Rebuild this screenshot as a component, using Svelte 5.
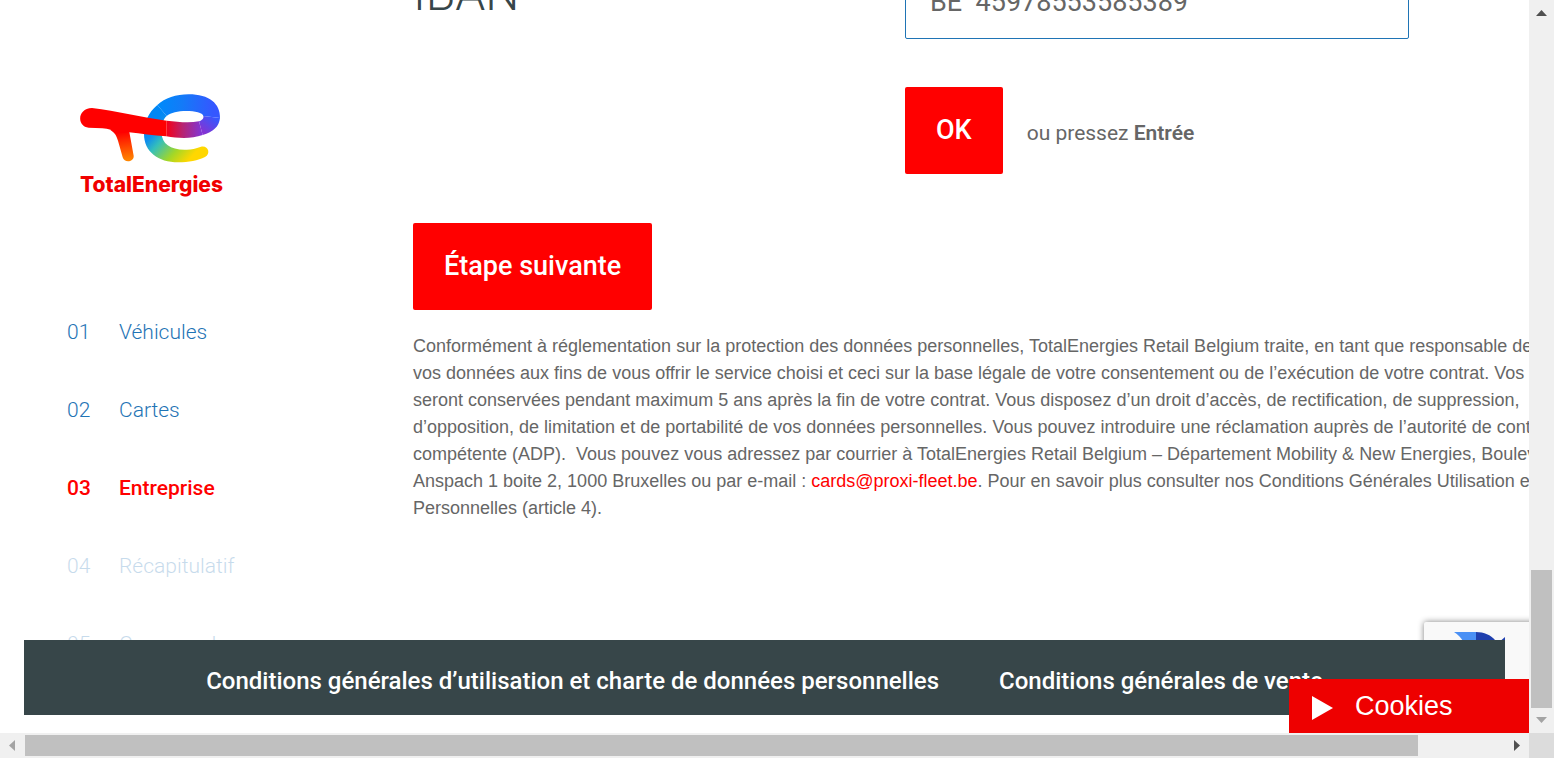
<script>
  const steps = [
    { no: '01', label: 'Véhicules', state: 'done' },
    { no: '02', label: 'Cartes', state: 'done' },
    { no: '03', label: 'Entreprise', state: 'current' },
    { no: '04', label: 'Récapitulatif', state: 'upcoming' },
    { no: '05', label: 'Commande', state: 'upcoming' }
  ];
  let iban = $state('BE  45978553585389');
</script>

<div class="window">
  <div class="page">
    <aside class="sidebar">
      <a class="logo" href="#home" aria-label="TotalEnergies">
        <svg viewBox="60 41 423 207" aria-hidden="true">
          <defs>
            <linearGradient id="tail" gradientUnits="userSpaceOnUse" x1="270" y1="135" x2="385" y2="240">
              <stop offset="0" stop-color="#0087f5" />
              <stop offset=".16" stop-color="#108fec" />
              <stop offset=".36" stop-color="#35bfba" />
              <stop offset=".7" stop-color="#a2d728" />
              <stop offset="1" stop-color="#ffd700" />
            </linearGradient>
            <linearGradient id="crown" gradientUnits="userSpaceOnUse" x1="300" y1="80" x2="460" y2="90">
              <stop offset="0" stop-color="#0089fa" />
              <stop offset=".4" stop-color="#137bf8" />
              <stop offset="1" stop-color="#3557ff" />
            </linearGradient>
            <linearGradient id="bend" gradientUnits="userSpaceOnUse" x1="465" y1="110" x2="430" y2="155">
              <stop offset="0" stop-color="#3558ff" />
              <stop offset="1" stop-color="#8434d3" />
            </linearGradient>
            <linearGradient id="bar" gradientUnits="userSpaceOnUse" x1="320" y1="0" x2="425" y2="0">
              <stop offset="0" stop-color="#f50017" />
              <stop offset=".45" stop-color="#b82370" />
              <stop offset="1" stop-color="#8035d6" />
            </linearGradient>
            <linearGradient id="stem" gradientUnits="userSpaceOnUse" x1="190" y1="155" x2="200" y2="240">
              <stop offset="0" stop-color="#ff0000" />
              <stop offset="1" stop-color="#ff8500" />
            </linearGradient>
          </defs>
          <path fill="url(#tail)" d="M292 74 C265 96 252 128 252 161 C252 214 294 246 355 246 C386 246 414 240 435 230 C454 219 444 194 423 199 C404 206 392 209 374 208 C331 207 305 190 305 157 C305 132 309 117 320 107 Z" />
          <path fill="url(#crown)" d="M292 74 C315 53 348 42 386 42 C448 42 481 70 480 113 L430 107 C428 97 405 92 379 92 C353 92 333 97 320 107 Z" />
          <path fill="url(#bend)" d="M430 107 L480 113 C477 139 460 155 428 164 L417 123 C426 120 432 114 430 107 Z" />
          <path fill="url(#bar)" d="M417 123 L428 164 C394 176 356 174 319 168 L320 121 C354 125 388 128 417 123 Z" />
          <path fill="url(#stem)" d="M150 148 C166 157 170 168 174 181 L188 231 C193 250 223 245 221 226 L207 150 Z" />
          <path fill="#ff0000" d="M96 83 C171 91 245 112 320 121 L319 168 C279 166 243 160 207 156 L170 159 C161 149 145 146 127 144 L86 142 C50 138 51 84 96 83 Z" />
        </svg>
        <span>TotalEnergies</span>
      </a>
      <nav aria-label="Étapes">
        {#each steps as step}
          <a class={step.state} href={'#etape-' + step.no}>
            <span>{step.no}</span><span>{step.label}</span>
          </a>
        {/each}
      </nav>
    </aside>

    <main>
      <form onsubmit={(e) => e.preventDefault()}>
        <div class="field">
          <label for="iban">IBAN</label>
          <div class="entry">
            <input id="iban" type="text" bind:value={iban} />
            <div class="confirm">
              <button type="submit">OK</button>
              <span>ou pressez <strong>Entrée</strong></span>
            </div>
          </div>
        </div>
        <button type="button">Étape suivante</button>
      </form>
      <p>
        Conformément à réglementation sur la protection des données personnelles, TotalEnergies Retail Belgium traite, en tant que responsable de<br />
        vos données aux fins de vous offrir le service choisi et ceci sur la base légale de votre consentement ou de l’exécution de votre contrat. Vos<br />
        seront conservées pendant maximum 5 ans après la fin de votre contrat. Vous disposez d’un droit d’accès, de rectification, de suppression,<br />
        d’opposition, de limitation et de portabilité de vos données personnelles. Vous pouvez introduire une réclamation auprès de l’autorité de contrôle<br />
        compétente (ADP).&nbsp; Vous pouvez vous adressez par courrier à TotalEnergies Retail Belgium – Département Mobility &amp; New Energies, Boulevard<br />
        Anspach 1 boite 2, 1000 Bruxelles ou par e-mail : <a href="mailto:cards@proxi-fleet.be">cards@proxi-fleet.be</a>. Pour en savoir plus consulter nos Conditions Générales Utilisation et<br />
        Personnelles (article 4).
      </p>
    </main>

    <div class="badge">
      <svg viewBox="0 0 64 60" aria-hidden="true">
        <path fill="#4a90f5" d="M0 0 H22 V22 H14 C12 13 8 5 0 0 Z" />
        <path fill="#1f3fae" d="M22 0 C30 0 37 3 41 8 L44 11 L51 5 V26 H28 L35 19 C32 15 28 13 22 13 Z" />
      </svg>
    </div>

    <footer>
      <a href="#utilisation">Conditions générales d’utilisation et charte de données personnelles</a>
      <a href="#vente">Conditions générales de vente</a>
    </footer>

    <button class="cookies" type="button">
      <svg viewBox="0 0 21 24" aria-hidden="true"><path fill="#fff" d="M0 0 L21 12 L0 24 Z" /></svg>
      Cookies
    </button>
  </div>

  <div class="track vertical" aria-hidden="true">
    <svg viewBox="0 0 25 25"><path fill="#505050" d="M7 16 L12.500 10 L18 16 Z" /></svg>
    <div class="run"><div class="thumb"></div></div>
    <svg viewBox="0 0 25 25"><path fill="#a3a3a3" d="M7 9 L12.500 15 L18 9 Z" /></svg>
  </div>
  <div class="track horizontal" aria-hidden="true">
    <svg viewBox="0 0 25 25"><path fill="#a3a3a3" d="M15 7 L9 12.500 L15 18 Z" /></svg>
    <div class="run"><div class="thumb"></div></div>
    <svg viewBox="0 0 25 25"><path fill="#505050" d="M10 7 L16 12.500 L10 18 Z" /></svg>
  </div>
  <div class="corner"></div>
</div>

<style>
  :global(body) {
    background: #fff;
    overflow: hidden;
  }
  .window {
    display: grid;
    grid-template: minmax(0, 1fr) 25px / minmax(0, 1fr) 25px;
    height: 100vh;
    font-family: Roboto, sans-serif;
    color: #666;
  }
  .page {
    position: relative;
    display: grid;
    grid-template-columns: 389px minmax(0, 1fr);
    padding: 0 0 0 24px;
    overflow: hidden;
  }
  a {
    text-decoration: none;
  }

  .sidebar {
    padding: 94px 0 0 43px;
  }
  .logo {
    display: block;
    width: 141px;
    margin-left: 13px;
    color: #f00000;
    font: 800 21px/26px Inter, sans-serif;
  }
  .logo svg {
    display: block;
    width: 100%;
  }
  .logo span {
    display: block;
    margin-top: 9px;
  }
  nav {
    display: grid;
    gap: 48px;
    margin-top: 119px;
  }
  nav a {
    display: grid;
    grid-template-columns: 52px 1fr;
    color: #1f74b5;
    font-size: 21px;
    font-weight: 300;
    line-height: 30px;
  }
  nav .current {
    color: #f00;
    font-weight: 500;
  }
  nav .upcoming {
    opacity: 0.25;
  }

  form {
    margin: -39px 120px 0 0;
  }
  .field {
    display: grid;
    grid-template-columns: 1fr 504px;
    margin-bottom: 49px;
  }
  label {
    color: #374649;
    font-size: 48px;
    font-weight: 300;
    line-height: 66px;
  }
  input {
    box-sizing: border-box;
    display: block;
    width: 100%;
    height: 78px;
    padding: 3px 24px 0;
    border: 1px solid #1f74b5;
    border-radius: 2px;
    background: #fff;
    color: #666;
    font: 400 27px/36px Roboto, sans-serif;
  }
  .confirm {
    display: flex;
    align-items: center;
    gap: 24px;
    margin-top: 48px;
    font-size: 21px;
    line-height: 30px;
  }
  .confirm span {
    padding-top: 4px;
  }
  .confirm strong {
    font-weight: 600;
  }
  form button {
    padding: 26px 31px;
    border: 0;
    border-radius: 2px;
    background: #f00;
    color: #fff;
    font: 500 27px/35px Roboto, sans-serif;
  }
  p {
    margin: 23px 0 0;
    font: 18px/27px "Liberation Sans", Arial, sans-serif;
    white-space: nowrap;
  }
  p a {
    color: #f00;
  }

  .badge {
    position: absolute;
    right: -151px;
    bottom: 21px;
    box-sizing: border-box;
    width: 256px;
    height: 90px;
    padding: 10px 30px;
    border-radius: 2px;
    background: #f9f9f9;
    box-shadow: 0 0 6px gray;
  }
  .badge svg {
    width: 64px;
  }
  footer {
    position: absolute;
    inset: auto 24px 18px;
    display: flex;
    justify-content: center;
    gap: 60px;
    padding: 25px 0 17px;
    background: #374649;
    font-size: 24px;
    font-weight: 500;
    line-height: 33px;
    white-space: nowrap;
  }
  footer a {
    color: #fff;
  }
  .cookies {
    position: absolute;
    right: 0;
    bottom: 0;
    display: flex;
    align-items: center;
    gap: 22px;
    width: 240px;
    height: 54px;
    padding: 0 23px;
    border: 0;
    background: #ee0000;
    color: #fff;
    font: 27px/36px "Liberation Sans", Arial, sans-serif;
  }
  .cookies svg {
    width: 21px;
    margin-top: 3px;
  }

  .track {
    display: flex;
    background: #f0f0f0;
  }
  .track svg {
    flex: none;
    width: 25px;
    height: 25px;
  }
  .run {
    display: flex;
    flex: 1;
  }
  .thumb {
    background: #c0c0c0;
  }
  .vertical,
  .vertical .run {
    flex-direction: column;
  }
  .vertical .run {
    justify-content: flex-end;
  }
  .vertical .thumb {
    height: 20.2%;
    margin: 0 2px;
  }
  .horizontal .thumb {
    width: 94.2%;
    margin: 2px 0;
  }
  .corner {
    background: #dcdcdc;
  }
</style>
